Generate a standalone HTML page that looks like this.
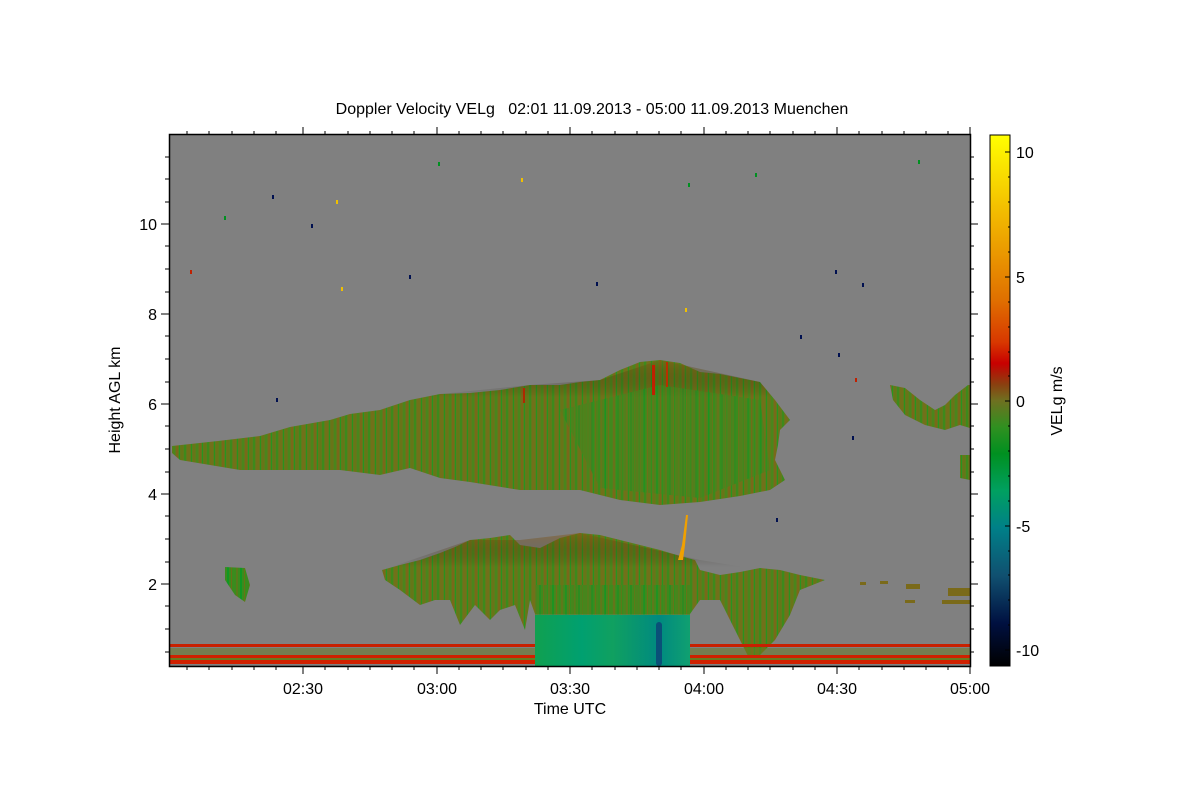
<!DOCTYPE html>
<html><head><meta charset="utf-8"><style>
html,body{margin:0;padding:0;background:#fff;}
svg{display:block;font-family:"Liberation Sans",sans-serif;}
</style></head><body>
<svg width="1200" height="800" viewBox="0 0 1200 800" xmlns="http://www.w3.org/2000/svg">
<defs>
<linearGradient id="cb" x1="0" y1="0" x2="0" y2="1">
<stop offset="0" stop-color="#ffff00"/>
<stop offset="0.17" stop-color="#f0b000"/>
<stop offset="0.31" stop-color="#e07000"/>
<stop offset="0.39" stop-color="#d83800"/>
<stop offset="0.43" stop-color="#c80000"/>
<stop offset="0.47" stop-color="#8a4010"/>
<stop offset="0.5" stop-color="#6f7020"/>
<stop offset="0.55" stop-color="#309020"/>
<stop offset="0.6" stop-color="#009020"/>
<stop offset="0.67" stop-color="#00a060"/>
<stop offset="0.74" stop-color="#008088"/>
<stop offset="0.83" stop-color="#105070"/>
<stop offset="0.92" stop-color="#001040"/>
<stop offset="1" stop-color="#000000"/>
</linearGradient>
<pattern id="cl" width="23" height="40" patternUnits="userSpaceOnUse">
<rect width="23" height="40" fill="#5f7a1c"/>
<rect x="0" width="2" height="40" fill="#3d8a1c"/>
<rect x="3" width="3" height="40" fill="#72701a"/>
<rect x="7" width="1" height="40" fill="#2a921e"/>
<rect x="9" width="2" height="40" fill="#6a7418"/>
<rect x="12" width="2" height="40" fill="#4a861c"/>
<rect x="15" width="2" height="40" fill="#7a681a"/>
<rect x="18" width="1" height="40" fill="#289420"/>
<rect x="20" width="2" height="40" fill="#667618"/>
</pattern>
<pattern id="cl2" width="13" height="40" patternUnits="userSpaceOnUse">
<rect width="13" height="40" fill="#3a8c1e"/>
<rect x="2" width="2" height="40" fill="#5a7a1c"/>
<rect x="6" width="2" height="40" fill="#109824"/>
<rect x="10" width="1" height="40" fill="#687218"/>
</pattern>
<linearGradient id="tl" x1="0" y1="0" x2="1" y2="0">
<stop offset="0" stop-color="#10a050"/>
<stop offset="0.3" stop-color="#00a070"/>
<stop offset="0.5" stop-color="#10a060"/>
<stop offset="0.8" stop-color="#008a80"/>
<stop offset="1" stop-color="#10a070"/>
</linearGradient>
<linearGradient id="vfade" x1="0" y1="0" x2="0" y2="1">
<stop offset="0" stop-color="#8a5a10" stop-opacity="0.45"/>
<stop offset="0.6" stop-color="#000" stop-opacity="0"/>
</linearGradient>
<linearGradient id="vfade2" x1="0" y1="0" x2="0" y2="1">
<stop offset="0" stop-color="#7a6414" stop-opacity="0.5"/>
<stop offset="0.4" stop-color="#000" stop-opacity="0"/>
</linearGradient>
</defs>

<text x="592" y="114" font-size="16" text-anchor="middle" xml:space="preserve">Doppler Velocity VELg   02:01 11.09.2013 - 05:00 11.09.2013 Muenchen</text>

<rect x="169" y="135" width="801" height="531" fill="#808080"/>

<!-- upper cloud -->
<path d="M172,446 L218,441 L260,436 L290,427 L330,420 L350,414 L380,410 L410,400 L440,394 L470,393 L500,390 L530,385 L560,385 L580,382 L600,380 L620,370 L640,362 L660,360 L680,363 L700,372 L720,374 L740,378 L760,382 L775,400 L790,420 L780,430 L778,445 L775,460 L785,480 L770,490 L740,496 L700,502 L660,505 L620,500 L580,490 L520,490 L470,482 L440,478 L410,468 L380,475 L340,470 L300,470 L240,470 L210,465 L180,460 L172,453 Z" fill="url(#cl)"/>
<path d="M172,446 L260,436 L350,414 L440,394 L530,385 L600,380 L660,360 L760,382 L790,420 L700,420 L500,430 L300,450 L172,453 Z" fill="url(#vfade2)"/>
<path d="M560,410 L660,385 L760,400 L770,470 L700,498 L600,488 Z" fill="url(#cl2)" opacity="0.55"/>
<rect x="652" y="365" width="3" height="30" fill="#c02000"/>
<rect x="666" y="362" width="2" height="25" fill="#b83000"/>
<rect x="523" y="388" width="2" height="15" fill="#b02800"/>

<!-- right top features -->
<path d="M890,385 L905,388 L920,400 L935,410 L945,405 L955,395 L968,385 L970,385 L970,428 L960,425 L945,430 L925,425 L905,415 L893,400 Z" fill="url(#cl)"/>
<path d="M960,455 L970,455 L970,480 L960,478 Z" fill="url(#cl)"/>

<!-- lower cloud -->
<path d="M382,570 L400,565 L420,560 L440,553 L455,547 L470,540 L490,538 L510,535 L520,545 L540,548 L560,538 L580,533 L600,535 L620,540 L640,545 L660,550 L680,556 L695,560 L700,570 L720,575 L740,572 L760,568 L780,570 L800,575 L825,580 L800,590 L790,615 L775,640 L760,655 L750,660 L740,640 L730,620 L720,600 L700,600 L690,614 L535,614 L530,600 L525,630 L515,605 L500,610 L490,620 L475,605 L460,625 L450,600 L435,600 L420,605 L400,590 L385,580 Z" fill="url(#cl)"/>
<path d="M382,570 L470,540 L520,540 L580,533 L700,560 L825,580 L800,590 L600,580 L400,590 Z" fill="url(#vfade)"/>
<path d="M535,585 L690,585 L690,615 L535,615 Z" fill="url(#cl2)" opacity="0.7"/>
<rect x="535" y="615" width="155" height="51" fill="url(#tl)"/>
<rect x="656" y="622" width="6" height="44" rx="3" fill="#0a5078"/>
<path d="M678,560 L682,545 L686,515 L688,515 L685,545 L683,560 Z" fill="#f0a000"/>
<path d="M225,567 L245,568 L250,585 L245,602 L235,595 L225,580 Z" fill="url(#cl2)"/>
<g fill="#7a6a1a">
<rect x="906" y="584" width="14" height="5"/><rect x="948" y="588" width="22" height="8"/><rect x="942" y="600" width="28" height="4"/><rect x="905" y="600" width="10" height="3"/><rect x="860" y="582" width="6" height="3"/><rect x="880" y="581" width="8" height="3"/>
</g>

<!-- bottom stripes -->
<rect x="169" y="644" width="366" height="3" fill="#c82000"/>
<rect x="690" y="644" width="280" height="3" fill="#c82000"/>
<rect x="169" y="648" width="366" height="7" fill="#6a7a20" opacity="0.5"/>
<rect x="690" y="648" width="280" height="7" fill="#6a7a20" opacity="0.5"/>
<rect x="169" y="655" width="366" height="3" fill="#d02000"/>
<rect x="690" y="655" width="280" height="3" fill="#d02000"/>
<rect x="169" y="658" width="366" height="2" fill="#6a7a20"/>
<rect x="690" y="658" width="280" height="2" fill="#6a7a20"/>
<rect x="169" y="660" width="366" height="4" fill="#d02000"/>
<rect x="690" y="660" width="280" height="4" fill="#d02000"/>
<rect x="169" y="664" width="366" height="2" fill="#808080"/>
<rect x="690" y="664" width="280" height="2" fill="#808080"/>

<!-- scattered dots -->
<g>
<rect x="272" y="195" width="2" height="4" fill="#001050"/>
<rect x="311" y="224" width="2" height="4" fill="#001050"/>
<rect x="336" y="200" width="2" height="4" fill="#f0c000"/>
<rect x="224" y="216" width="2" height="4" fill="#009020"/>
<rect x="190" y="270" width="2" height="4" fill="#c02000"/>
<rect x="409" y="275" width="2" height="4" fill="#001050"/>
<rect x="341" y="287" width="2" height="4" fill="#f0c000"/>
<rect x="438" y="162" width="2" height="4" fill="#009020"/>
<rect x="521" y="178" width="2" height="4" fill="#f0c000"/>
<rect x="688" y="183" width="2" height="4" fill="#009020"/>
<rect x="755" y="173" width="2" height="4" fill="#009020"/>
<rect x="918" y="160" width="2" height="4" fill="#009020"/>
<rect x="835" y="270" width="2" height="4" fill="#001050"/>
<rect x="862" y="283" width="2" height="4" fill="#001050"/>
<rect x="800" y="335" width="2" height="4" fill="#001050"/>
<rect x="838" y="353" width="2" height="4" fill="#001050"/>
<rect x="855" y="378" width="2" height="4" fill="#c02000"/>
<rect x="852" y="436" width="2" height="4" fill="#001050"/>
<rect x="276" y="398" width="2" height="4" fill="#001050"/>
<rect x="685" y="308" width="2" height="4" fill="#f0c000"/>
<rect x="776" y="518" width="2" height="4" fill="#001050"/>
<rect x="596" y="282" width="2" height="4" fill="#001050"/>
</g>

<!-- axes box -->
<rect x="169.5" y="134.5" width="801" height="532" fill="none" stroke="#000" stroke-width="1.5"/>

<!-- y ticks -->
<g stroke="#000" stroke-width="1">
<line x1="161" y1="224" x2="169" y2="224"/><line x1="161" y1="314" x2="169" y2="314"/><line x1="161" y1="404" x2="169" y2="404"/><line x1="161" y1="494" x2="169" y2="494"/><line x1="161" y1="584" x2="169" y2="584"/>
<line x1="165" y1="157" x2="169" y2="157"/><line x1="165" y1="179" x2="169" y2="179"/><line x1="165" y1="202" x2="169" y2="202"/><line x1="165" y1="246" x2="169" y2="246"/><line x1="165" y1="269" x2="169" y2="269"/><line x1="165" y1="292" x2="169" y2="292"/><line x1="165" y1="336" x2="169" y2="336"/><line x1="165" y1="359" x2="169" y2="359"/><line x1="165" y1="382" x2="169" y2="382"/><line x1="165" y1="426" x2="169" y2="426"/><line x1="165" y1="449" x2="169" y2="449"/><line x1="165" y1="472" x2="169" y2="472"/><line x1="165" y1="516" x2="169" y2="516"/><line x1="165" y1="539" x2="169" y2="539"/><line x1="165" y1="562" x2="169" y2="562"/><line x1="165" y1="606" x2="169" y2="606"/><line x1="165" y1="629" x2="169" y2="629"/><line x1="165" y1="652" x2="169" y2="652"/>
<line x1="970" y1="224" x2="978" y2="224"/><line x1="970" y1="314" x2="978" y2="314"/><line x1="970" y1="404" x2="978" y2="404"/><line x1="970" y1="494" x2="978" y2="494"/><line x1="970" y1="584" x2="978" y2="584"/>
<line x1="970" y1="157" x2="974" y2="157"/><line x1="970" y1="179" x2="974" y2="179"/><line x1="970" y1="202" x2="974" y2="202"/><line x1="970" y1="246" x2="974" y2="246"/><line x1="970" y1="269" x2="974" y2="269"/><line x1="970" y1="292" x2="974" y2="292"/><line x1="970" y1="336" x2="974" y2="336"/><line x1="970" y1="359" x2="974" y2="359"/><line x1="970" y1="382" x2="974" y2="382"/><line x1="970" y1="426" x2="974" y2="426"/><line x1="970" y1="449" x2="974" y2="449"/><line x1="970" y1="472" x2="974" y2="472"/><line x1="970" y1="516" x2="974" y2="516"/><line x1="970" y1="539" x2="974" y2="539"/><line x1="970" y1="562" x2="974" y2="562"/><line x1="970" y1="606" x2="974" y2="606"/><line x1="970" y1="629" x2="974" y2="629"/><line x1="970" y1="652" x2="974" y2="652"/>
</g>
<g font-size="16" text-anchor="end">
<text x="157" y="230">10</text><text x="157" y="320">8</text><text x="157" y="410">6</text><text x="157" y="500">4</text><text x="157" y="590">2</text>
</g>
<text transform="translate(120,400) rotate(-90)" font-size="16" text-anchor="middle">Height AGL km</text>

<!-- x ticks -->
<g stroke="#000" stroke-width="1">
<line x1="303" y1="666" x2="303" y2="674"/><line x1="437" y1="666" x2="437" y2="674"/><line x1="570" y1="666" x2="570" y2="674"/><line x1="704" y1="666" x2="704" y2="674"/><line x1="837" y1="666" x2="837" y2="674"/>
<line x1="303" y1="127" x2="303" y2="135"/><line x1="437" y1="127" x2="437" y2="135"/><line x1="570" y1="127" x2="570" y2="135"/><line x1="704" y1="127" x2="704" y2="135"/><line x1="837" y1="127" x2="837" y2="135"/>
</g>
<g stroke="#000" stroke-width="1">
<path d="M187,666v4M209,666v4M232,666v4M254,666v4M276,666v4M325,666v4M348,666v4M370,666v4M392,666v4M414,666v4M459,666v4M481,666v4M503,666v4M526,666v4M548,666v4M592,666v4M615,666v4M637,666v4M659,666v4M681,666v4M726,666v4M748,666v4M770,666v4M793,666v4M815,666v4M859,666v4M882,666v4M904,666v4M926,666v4M948,666v4"/>
<path d="M187,135v-4M209,135v-4M232,135v-4M254,135v-4M276,135v-4M325,135v-4M348,135v-4M370,135v-4M392,135v-4M414,135v-4M459,135v-4M481,135v-4M503,135v-4M526,135v-4M548,135v-4M592,135v-4M615,135v-4M637,135v-4M659,135v-4M681,135v-4M726,135v-4M748,135v-4M770,135v-4M793,135v-4M815,135v-4M859,135v-4M882,135v-4M904,135v-4M926,135v-4M948,135v-4M970,135v-8M970,666v8"/>
</g>
<g font-size="16" text-anchor="middle">
<text x="303" y="694">02:30</text><text x="437" y="694">03:00</text><text x="570" y="694">03:30</text><text x="704" y="694">04:00</text><text x="837" y="694">04:30</text><text x="970" y="694">05:00</text>
</g>
<text x="570" y="714" font-size="16" text-anchor="middle">Time UTC</text>

<!-- colorbar -->
<rect x="990" y="135" width="20" height="531" fill="url(#cb)" stroke="#000" stroke-width="1"/>
<g stroke="#000" stroke-width="1">
<path d="M1010,152h-5M1010,277h-5M1010,401h-5M1010,526h-5M1010,650h-5M1010,177h-2M1010,202h-2M1010,227h-2M1010,252h-2M1010,302h-2M1010,327h-2M1010,352h-2M1010,376h-2M1010,426h-2M1010,451h-2M1010,476h-2M1010,501h-2M1010,551h-2M1010,575h-2M1010,600h-2M1010,625h-2"/>
</g>
<g font-size="16">
<text x="1016" y="158">10</text><text x="1016" y="283">5</text><text x="1016" y="407">0</text><text x="1016" y="532">-5</text><text x="1016" y="656">-10</text>
</g>
<text transform="translate(1062,401) rotate(-90)" font-size="16" text-anchor="middle">VELg m/s</text>
</svg>
</body></html>
